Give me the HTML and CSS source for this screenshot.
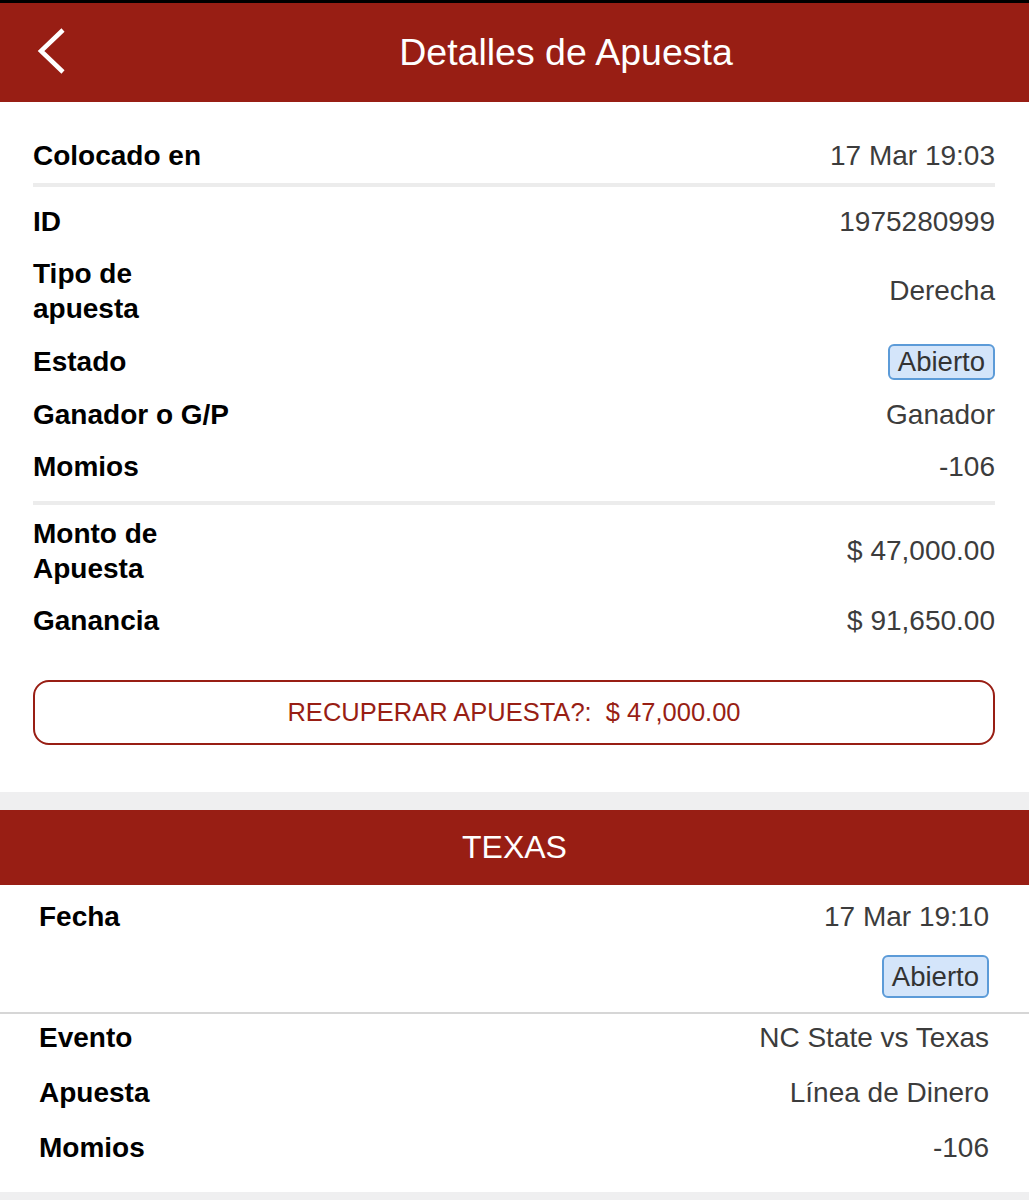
FILE: index.html
```html
<!DOCTYPE html>
<html>
<head>
	<title>Detalles de Apuesta</title>
	<link rel="stylesheet" href="styles.css">
</head>
<body>
	<header class="topbar">
		<a class="back" href="#">
			<svg width="32" height="50" viewBox="0 0 32 50">
				<polyline points="27,4 5,25 27,46" fill="none" stroke="#fff" stroke-width="4.5"/>
			</svg>
		</a>
		<h1 class="title">Detalles de Apuesta</h1>
	</header>

	<section class="summary">
		<div class="row">
			<span class="label">Colocado en</span>
			<span class="value">17 Mar 19:03</span>
		</div>
		<div class="divider divider-top"></div>

		<div class="row">
			<span class="label">ID</span>
			<span class="value">1975280999</span>
		</div>
		<div class="row">
			<span class="label">Tipo de<br>apuesta</span>
			<span class="value">Derecha</span>
		</div>
		<div class="row row-status">
			<span class="label">Estado</span>
			<span class="badge">Abierto</span>
		</div>
		<div class="row">
			<span class="label">Ganador o G/P</span>
			<span class="value">Ganador</span>
		</div>
		<div class="row">
			<span class="label">Momios</span>
			<span class="value">-106</span>
		</div>
		<div class="divider divider-mid"></div>

		<div class="row">
			<span class="label">Monto de<br>Apuesta</span>
			<span class="value">$ 47,000.00</span>
		</div>
		<div class="row">
			<span class="label">Ganancia</span>
			<span class="value">$ 91,650.00</span>
		</div>

		<button class="cashout">RECUPERAR APUESTA?:&nbsp; $ 47,000.00</button>
	</section>

	<div class="gap"></div>

	<section class="leg">
		<div class="leg-title">TEXAS</div>
		<div class="leg-head">
			<div class="row">
				<span class="label">Fecha</span>
				<span class="value">17 Mar 19:10</span>
			</div>
			<div class="status">
				<span class="badge badge-tall">Abierto</span>
			</div>
		</div>
		<div class="leg-body">
			<div class="row row-leg">
				<span class="label">Evento</span>
				<span class="value">NC State vs Texas</span>
			</div>
			<div class="row row-leg">
				<span class="label">Apuesta</span>
				<span class="value">Línea de Dinero</span>
			</div>
			<div class="row row-leg">
				<span class="label">Momios</span>
				<span class="value">-106</span>
			</div>
		</div>
	</section>

	<div class="gap"></div>
</body>
</html>
```

FILE: styles.css
```css
/* bet details screen */
body, html {
	margin: 0;
	padding: 0;
	background: #fff;
	font-family: 'Liberation Sans', Arial, sans-serif;
}

.topbar {
	display: flex;
	align-items: center;
	height: 99px;
	background: #981e14;
	border-top: 3px solid #000;
}

.back {
	display: flex;
	align-items: center;
	width: 103px;
	height: 100%;
	padding-left: 36px;
	box-sizing: border-box;
}

.back svg {
	margin-top: -4px;
}

.title {
	flex: 1;
	margin: 0;
	text-align: center;
	color: #fff;
	font-weight: normal;
	font-size: 37.5px;
}

.summary {
	padding: 27px 34px 47px 33px;
}

.row {
	display: flex;
	justify-content: space-between;
	align-items: center;
	padding: 8.5px 0;
	font-size: 28px;
	line-height: 35px;
}

.row-status {
	padding: 9.5px 0 8.5px;
}

.label {
	font-weight: bold;
	color: #000;
}

.value {
	color: #3c3c3c;
}

.badge {
	display: inline-block;
	padding: 0 8px;
	font-size: 27.5px;
	line-height: 32px;
	color: #333;
	background: #d4e5fa;
	border: 2px solid #5c9bd8;
	border-radius: 6px;
}

.badge-tall {
	line-height: 39px;
}

.divider {
	height: 4px;
	background: #ececec;
}

.divider-top {
	margin: 2px 0 8px;
}

.divider-mid {
	margin: 9px 0 2px;
}

.cashout {
	display: block;
	width: 100%;
	height: 65px;
	margin-top: 34px;
	background: #fff;
	color: #981e14;
	border: 2px solid #981e14;
	border-radius: 16px;
	font-family: 'Liberation Sans', Arial, sans-serif;
	font-size: 25.5px;
	cursor: pointer;
}

.gap {
	height: 18px;
	background: #efeff0;
}

.leg-title {
	height: 75px;
	line-height: 75px;
	background: #981e14;
	color: #fff;
	text-align: center;
	font-size: 32px;
}

.leg-head {
	padding: 5px 40px 14px 39px;
	border-bottom: 2px solid #d6d6d6;
}

.status {
	display: flex;
	justify-content: flex-end;
	margin-top: 13px;
}

.leg-body {
	padding: 5.5px 40px 7.5px 39px;
}

.row-leg {
	padding: 0;
	margin-bottom: 20px;
}
```
